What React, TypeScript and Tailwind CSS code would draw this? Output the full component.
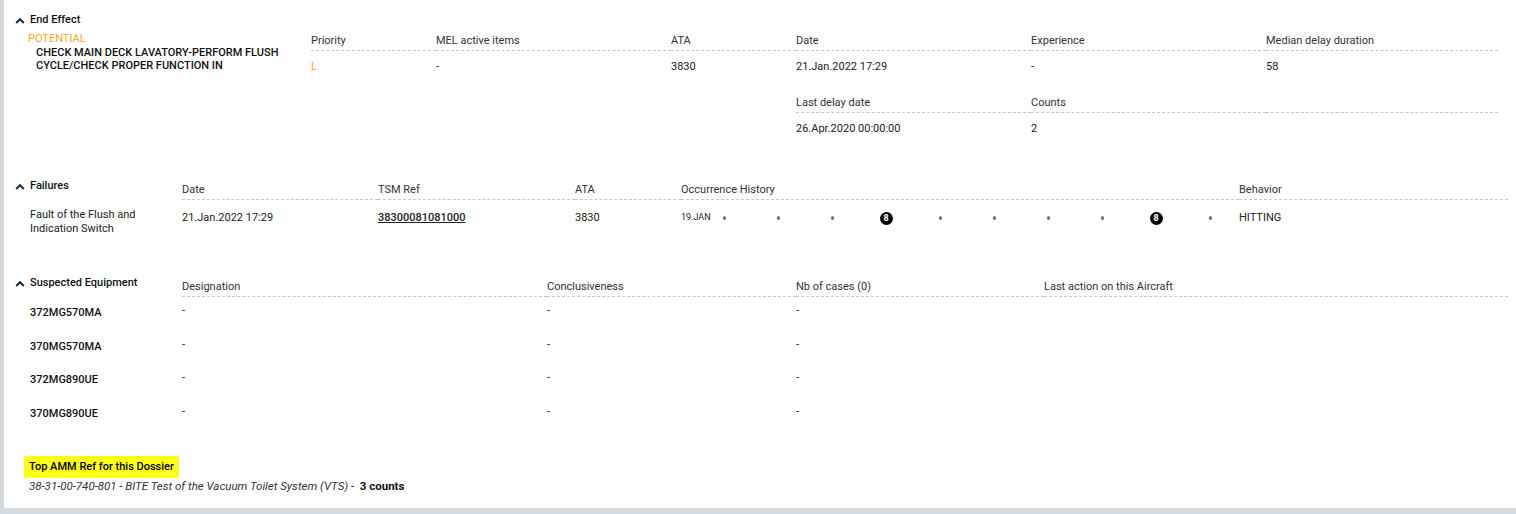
import React from "react";

const Chevron = () => (
  <svg width="10" height="7" viewBox="0 0 10 7" className="shrink-0">
    <polyline points="1.2,6 5,2.2 8.8,6" fill="none" stroke="#1f2a3a" strokeWidth="2" />
  </svg>
);

const Dot = () => <span className="block w-[3px] h-[4px] rounded-full bg-[#6b7385]" />;
const Badge = ({ n }: { n: number }) => (
  <span className="flex items-center justify-center w-[13px] h-[13px] rounded-full bg-black text-white text-[9px] font-bold leading-none">
    {n}
  </span>
);

const head = "h-[17px] leading-[14px] pb-[3px] border-b border-dashed border-[#c8c8c8] text-[#333]";

export default function App() {
  const occ: (number | null)[] = [null, null, null, 8, null, null, null, null, 8, null];
  const equip = ["372MG570MA", "370MG570MA", "372MG890UE", "370MG890UE"];
  return (
    <div
      className="bg-[#d3dbe0] pl-[4px] pb-[6px] text-[11px] text-[#222]"
      style={{ fontFamily: "Roboto, 'Liberation Sans', sans-serif" }}
    >
      <div className="bg-white h-[508px] pl-[11px] pr-[8px] pt-[13px]">
        {/* End Effect */}
        <div className="flex">
          <div className="w-[296px] shrink-0">
            <div className="flex items-center gap-[5px] h-[14px] font-medium text-[#111]">
              <Chevron />
              <span>End Effect</span>
            </div>
            <div className="pl-[13px] mt-[5px] leading-[14px] text-[#f5a623]">POTENTIAL</div>
            <div className="pl-[21px] leading-[13px] font-medium text-[11px] text-[#111] uppercase">
              Check main deck lavatory-perform flush
              <br />
              cycle/check proper function in
            </div>
          </div>
          <div className="flex-1 pt-[21px] pr-[10px]">
            <div className="grid grid-cols-[125px_235px_125px_235px_235px_1fr]">
              <div className={head}>Priority</div>
              <div className={head}>MEL active items</div>
              <div className={head}>ATA</div>
              <div className={head}>Date</div>
              <div className={head}>Experience</div>
              <div className={head}>Median delay duration</div>
              <div className="pt-[9px] leading-[14px] text-[#f5a623]">L</div>
              <div className="pt-[9px] leading-[14px]">-</div>
              <div className="pt-[9px] leading-[14px]">3830</div>
              <div className="pt-[9px] leading-[14px]">21.Jan.2022 17:29</div>
              <div className="pt-[9px] leading-[14px]">-</div>
              <div className="pt-[9px] leading-[14px]">58</div>
              <div className="col-span-3" />
              <div className={head + " mt-[22px]"}>Last delay date</div>
              <div className={head + " mt-[22px]"}>Counts</div>
              <div className={head + " mt-[22px]"}></div>
              <div className="col-span-3" />
              <div className="pt-[9px] leading-[14px]">26.Apr.2020 00:00:00</div>
              <div className="pt-[9px] leading-[14px]">2</div>
              <div />
            </div>
          </div>
        </div>

        {/* Failures */}
        <div className="flex mt-[43px]">
          <div className="w-[167px] shrink-0">
            <div className="flex items-center gap-[5px] h-[14px] font-medium text-[#111]">
              <Chevron />
              <span>Failures</span>
            </div>
            <div className="pl-[15px] mt-[15px] leading-[14px] text-[#222]">
              Fault of the Flush and
              <br />
              Indication Switch
            </div>
          </div>
          <div className="flex-1 pt-[4px]">
            <div className="grid grid-cols-[196px_197px_106px_558px_1fr]">
              <div className={head}>Date</div>
              <div className={head}>TSM Ref</div>
              <div className={head}>ATA</div>
              <div className={head}>Occurrence History</div>
              <div className={head}>Behavior</div>
              <div className="pt-[11px] leading-[14px]">21.Jan.2022 17:29</div>
              <div className="pt-[11px] leading-[14px] font-medium underline">38300081081000</div>
              <div className="pt-[11px] leading-[14px]">3830</div>
              <div className="pt-[10px]">
                <div className="flex items-center h-[16px]">
                  <span className="text-[9px] w-[41.5px] shrink-0">19.JAN</span>
                  {occ.map((o, i) => (
                    <span key={i} className="w-[54px] shrink-0 flex items-center">
                      {o ? <span className="-ml-[5px]"><Badge n={o} /></span> : <Dot />}
                    </span>
                  ))}
                </div>
              </div>
              <div className="pt-[11px] leading-[14px]">HITTING</div>
            </div>
          </div>
        </div>

        {/* Suspected Equipment */}
        <div className="flex mt-[40px]">
          <div className="w-[167px] shrink-0">
            <div className="flex items-center gap-[5px] h-[14px] font-medium text-[#111]">
              <Chevron />
              <span>Suspected Equipment</span>
            </div>
          </div>
          <div className="flex-1 pt-[4px]">
            <div className="grid grid-cols-[365px_249px_248px_1fr]">
              <div className={head}>Designation</div>
              <div className={head}>Conclusiveness</div>
              <div className={head}>Nb of cases (0)</div>
              <div className={head}>Last action on this Aircraft</div>
            </div>
          </div>
        </div>
        <div className="flex flex-col">
          {equip.map((e) => (
            <div key={e} className="flex h-[33.7px] items-start">
              <div className="w-[167px] shrink-0 pl-[15px] font-medium text-[#111] leading-[14px] pt-[9px]">{e}</div>
              <div className="flex-1 grid grid-cols-[365px_249px_248px_1fr] leading-[14px] pt-[7px]">
                <div>-</div>
                <div>-</div>
                <div>-</div>
                <div></div>
              </div>
            </div>
          ))}
        </div>

        {/* Top AMM */}
        <div className="mt-[24px] pl-[9px]">
          <div className="inline-block bg-[#ffff1a] pl-[5px] pr-[5px] py-[4px] leading-[14px] font-medium text-black">
            Top AMM Ref for this Dossier
          </div>
          <div className="pl-[5px] mt-[1px] leading-[14px] text-[11.5px] text-[#333]">
            <span className="italic">38-31-00-740-801 - BITE Test of the Vacuum Toilet System (VTS) - </span>
            <span className="font-bold text-[#111]">&nbsp;3 counts</span>
          </div>
        </div>
      </div>
    </div>
  );
}
